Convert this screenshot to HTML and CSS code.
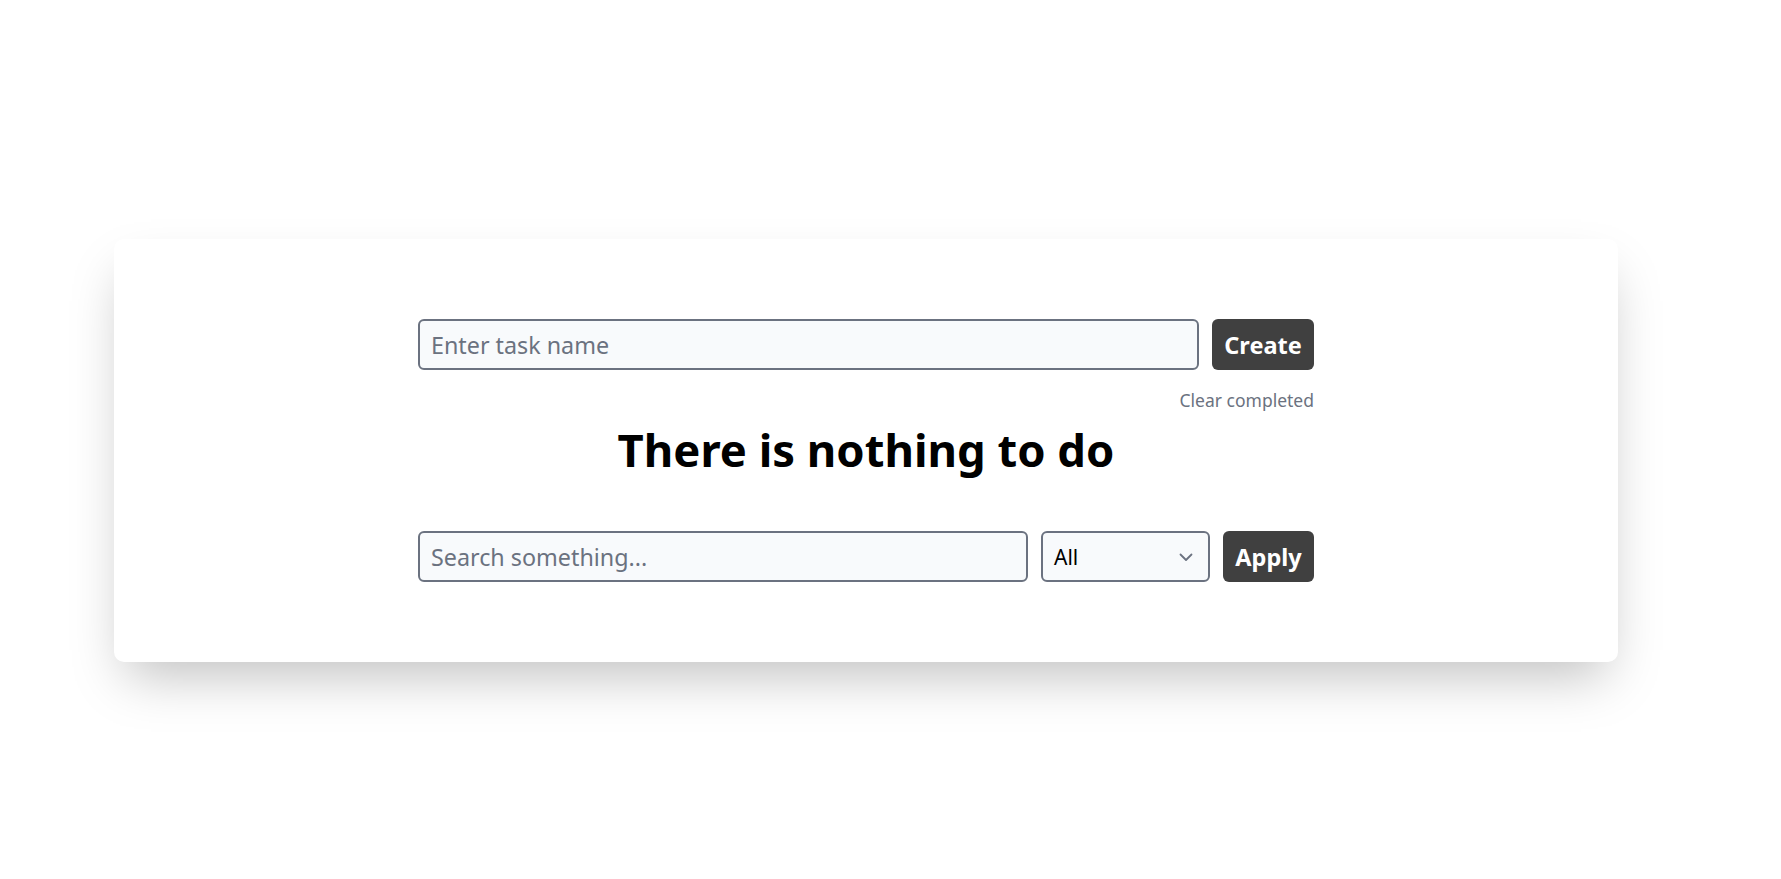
FILE: index.html
```html
<!DOCTYPE html>
<html lang="en">
<head>
<meta charset="utf-8">
<title>Todo</title>
<link rel="stylesheet" href="styles.css">
</head>
<body>
<main class="page">
  <section class="card">
    <div class="content">
      <form class="row">
        <input class="field field-grow" type="text" placeholder="Enter task name">
        <button class="btn btn-create" type="button">Create</button>
      </form>
      <div class="clear-row"><span class="clear-link">Clear completed</span></div>
      <h1 class="empty">There is nothing to do</h1>
      <form class="row search-row">
        <input class="field field-grow" type="text" placeholder="Search something...">
        <div class="select">
          <span class="select-value">All</span>
          <svg class="chevron" width="16" height="16" viewBox="0 0 16 16" aria-hidden="true"><path d="M2.5 5.5 L8 11 L13.5 5.5" fill="none" stroke="#6b7280" stroke-width="1.8" stroke-linecap="round" stroke-linejoin="round"/></svg>
        </div>
        <button class="btn btn-apply" type="button">Apply</button>
      </form>
    </div>
  </section>
</main>
</body>
</html>
```
FILE: styles.css
```css
* { box-sizing: border-box; }
html, body { margin: 0; padding: 0; background: #ffffff; }
body { font-family: "Noto Sans", "Open Sans", sans-serif; color: #000; }

.page {
  min-height: 100vh;
  padding: 239px 0 120px 114px;
}

.card {
  width: 1504px;
  background: #fff;
  border-radius: 10px;
  box-shadow: 0 25px 50px -12px rgba(0, 0, 0, 0.25);
  padding: 80px 0;
}

.content {
  width: 896px;
  margin: 0 auto;
}

.row {
  display: flex;
  gap: 13px;
  margin: 0;
}

.field {
  height: 51px;
  border: 2px solid #6b7280;
  border-radius: 6px;
  background: #f8fafc;
  padding: 0 11px;
  font-family: inherit;
  font-size: 23.3px;
  color: #111;
  outline: none;
}
.field::placeholder { color: #6b7280; opacity: 1; }
.field-grow { flex: 1; min-width: 0; }

.btn {
  height: 51px;
  border: none;
  border-radius: 6px;
  background: #404040;
  color: #fff;
  font-family: inherit;
  font-weight: 700;
  font-size: 23.5px;
  padding: 0;
  cursor: pointer;
}
.btn-create { width: 102px; }
.btn-apply { width: 91px; }

.clear-row {
  display: flex;
  justify-content: flex-end;
  margin-top: 18px;
  height: 24px;
  line-height: 24px;
}
.clear-link {
  font-size: 17.5px;
  color: #6b7280;
}

.empty {
  margin: 7px 0 0;
  text-align: center;
  font-size: 45.4px;
  line-height: 60px;
  font-weight: 700;
}

.search-row {
  margin-top: 52px;
}

.select {
  width: 169px;
  height: 51px;
  border: 2px solid #6b7280;
  border-radius: 6px;
  background: #f8fafc;
  display: flex;
  align-items: center;
  justify-content: space-between;
  padding: 0 14px 0 11px;
}
.select-value {
  font-size: 21px;
  color: #000;
}
.chevron { display: block; }
```
